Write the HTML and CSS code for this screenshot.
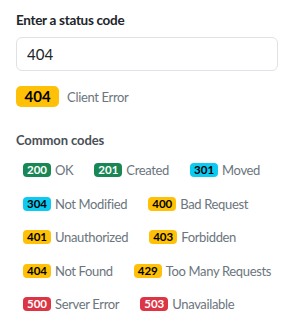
FILE: index.html
```html
<!DOCTYPE html>
<html lang="en">
    <head>
        <meta charset="UTF-8" />
        <meta name="viewport" content="width=device-width, initial-scale=1.0" />
        <title>status codes</title>
        <link rel="stylesheet" href="styles.css">
    </head>
    <body>
        <div class="app">
            <label class="field-label" for="code">Enter a status code</label>
            <input id="code" class="code-input" type="text" value="404" />

            <div class="result">
                <span class="badge badge-lg warning">404</span>
                <span class="result-text">Client Error</span>
            </div>

            <h3 class="section-title">Common codes</h3>
            <ul class="codes">
                <li><span class="badge success">200</span> OK</li>
                <li><span class="badge success">201</span> Created</li>
                <li><span class="badge info">301</span> Moved</li>
                <li><span class="badge info">304</span> Not Modified</li>
                <li><span class="badge warning">400</span> Bad Request</li>
                <li><span class="badge warning">401</span> Unauthorized</li>
                <li><span class="badge warning">403</span> Forbidden</li>
                <li><span class="badge warning">404</span> Not Found</li>
                <li><span class="badge warning">429</span> Too Many Requests</li>
                <li><span class="badge danger">500</span> Server Error</li>
                <li><span class="badge danger">503</span> Unavailable</li>
            </ul>
        </div>
    </body>
</html>
```

FILE: styles.css
```css
* {
    box-sizing: border-box;
}

body {
    margin: 0;
    font-family: Lato, "Noto Sans", sans-serif;
    color: #212529;
    background-color: #fff;
}

.app {
    padding: 10px 0 0 16px;
    width: 280px;
}

.field-label {
    display: block;
    font-size: 13.5px;
    font-weight: 700;
    letter-spacing: -0.3px;
    line-height: 20px;
}

.code-input {
    display: block;
    width: 262px;
    height: 34px;
    margin-top: 7px;
    padding: 0 10px;
    font: inherit;
    font-size: 15px;
    color: #212529;
    border: 1px solid #dee2e6;
    border-radius: 6px;
    outline: none;
}

.result {
    display: flex;
    align-items: center;
    gap: 8px;
    margin-top: 15px;
}

.result-text {
    font-size: 13px;
    letter-spacing: -0.35px;
    color: #6c757d;
}

.section-title {
    margin: 23px 0 0;
    font-size: 13px;
    font-weight: 700;
    letter-spacing: -0.1px;
    line-height: 20px;
    color: #495057;
}

.codes {
    display: flex;
    flex-wrap: wrap;
    column-gap: 21px;
    row-gap: 13.5px;
    margin: 10px 0 0;
    padding: 0 0 0 7px;
    list-style: none;
}

.codes li {
    display: flex;
    align-items: center;
    gap: 4px;
    height: 20px;
    font-size: 13px;
    letter-spacing: -0.35px;
    color: #6c757d;
    white-space: nowrap;
}

.badge {
    display: inline-block;
    height: 14px;
    padding: 0 4px;
    font-size: 11.5px;
    font-weight: 700;
    letter-spacing: 0;
    line-height: 14px;
    border-radius: 4px;
}

.badge-lg {
    height: 21px;
    padding: 0 8.5px;
    font-size: 15px;
    line-height: 21px;
    border-radius: 5px;
}

.success {
    color: #fff;
    background-color: #198754;
}

.info {
    color: #000;
    background-color: #0dcaf0;
}

.warning {
    color: #000;
    background-color: #ffc107;
}

.danger {
    color: #fff;
    background-color: #dc3545;
}
```
